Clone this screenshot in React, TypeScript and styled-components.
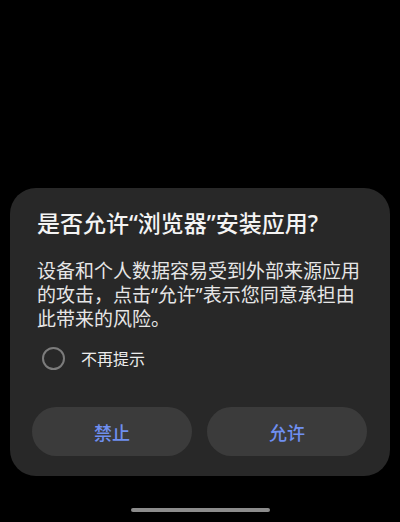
import React from 'react';
import styled, { createGlobalStyle } from 'styled-components';

const GlobalStyle = createGlobalStyle`
  html, body {
    margin: 0;
    padding: 0;
    background: #000000;
  }
  body {
    font-family: "Noto Sans CJK SC", "Noto Sans", sans-serif;
  }
`;

// latin font first so the curly quotes come out narrow, CJK falls through
const textFont = `"Noto Sans", "Noto Sans CJK SC", sans-serif`;

const Screen = styled.div`
  height: 522px;
  display: flex;
  flex-direction: column;
  justify-content: flex-end;
  background: #000000;
`;

const Dialog = styled.div`
  margin: 0 10px;
  padding: 20px 23px 20px 27px;
  background: #282828;
  border-radius: 26px;
  display: flex;
  flex-direction: column;
`;

const Title = styled.h2`
  margin: 0;
  font-family: ${textFont};
  font-size: 23px;
  line-height: 30px;
  font-weight: 500;
  color: #f4f4f4;
`;

const Message = styled.p`
  margin: 21px 0 0;
  font-family: ${textFont};
  font-size: 19px;
  line-height: 24px;
  font-weight: 400;
  color: #e6e6e6;
`;

const CheckRow = styled.label`
  margin: 15px 0 0 5px;
  height: 24px;
  display: flex;
  align-items: center;
  gap: 16px;
  cursor: pointer;
`;

const Ring = styled.span`
  width: 19px;
  height: 19px;
  border-radius: 50%;
  border: 2px solid #7c7c7c;
  flex-shrink: 0;
`;

const CheckLabel = styled.span`
  font-size: 16px;
  color: #ececec;
`;

const Actions = styled.div`
  margin: 37px 0 0 -5px;
  display: grid;
  grid-template-columns: 1fr 1fr;
  gap: 15px;
`;

const ActionButton = styled.button`
  height: 49px;
  border: none;
  border-radius: 25px;
  background: #3b3b3b;
  color: #6f8ff0;
  font-family: inherit;
  font-size: 18px;
  font-weight: 500;
  cursor: pointer;
`;

const Footer = styled.div`
  height: 46px;
  display: flex;
  justify-content: center;
  align-items: flex-start;
`;

const HomeBar = styled.div`
  margin-top: 32px;
  width: 139px;
  height: 4px;
  border-radius: 2px;
  background: #8c8c8c;
`;

const App: React.FC = () => {
  return (
    <>
      <GlobalStyle />
      <Screen>
        <Dialog>
          <Title>是否允许“浏览器”安装应用?</Title>
          <Message>
            设备和个人数据容易受到外部来源应用的攻击，点击“允许”表示您同意承担由此带来的风险。
          </Message>
          <CheckRow>
            <Ring />
            <CheckLabel>不再提示</CheckLabel>
          </CheckRow>
          <Actions>
            <ActionButton>禁止</ActionButton>
            <ActionButton>允许</ActionButton>
          </Actions>
        </Dialog>
        <Footer>
          <HomeBar />
        </Footer>
      </Screen>
    </>
  );
};

export default App;
